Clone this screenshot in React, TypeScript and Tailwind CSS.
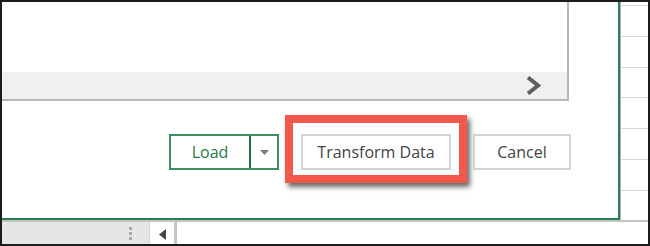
const font = { fontFamily: '"Open Sans", "Noto Sans", sans-serif' };

const cellRows = [
  'h-[32px] border-t border-[#d6d6d6]',
  'h-[31px] border-t border-[#d6d6d6]',
  'h-[31px] border-t border-[#d6d6d6]',
  'h-[31px] border-t border-[#d6d6d6]',
  'h-[32px] border-t border-[#d6d6d6]',
  'h-[31px] border-t border-[#d6d6d6]',
  'h-[31px] border-t border-[#d6d6d6]',
];

function Chevron() {
  return (
    <svg width="16" height="19" viewBox="0 0 16 19">
      <polyline points="3,1.5 13,9.5 3,17.5" fill="none" stroke="#5f5f5f" strokeWidth="4" strokeLinejoin="miter" />
    </svg>
  );
}

function LoadButton() {
  return (
    <div className="mt-[19px] flex h-[36px] w-[110px] border-2 border-[#3f8f63] bg-white">
      <div className="flex flex-1 items-center justify-center text-[16px] text-[#1f7a4a]">Load</div>
      <div className="flex w-[28px] items-center justify-center border-l-2 border-[#217346]">
        <svg width="9" height="5" viewBox="0 0 9 5">
          <polygon points="0,0 9,0 4.5,5" fill="#7a7a7a" />
        </svg>
      </div>
    </div>
  );
}

export default function App() {
  return (
    <div className="flex h-[246px] w-[650px] flex-col overflow-hidden border-2 border-[#1c1c1c] bg-white" style={font}>
      <div className="flex h-[218px]">
        {/* dialog */}
        <div className="flex w-[618px] flex-col border-b-2 border-r-2 border-[#2b7d52] bg-white">
          <div className="flex h-[99px] w-[567px] flex-col border-b-2 border-r-2 border-[#b8b8b8]">
            <div className="h-[70px] bg-white" />
            <div className="flex flex-1 items-center justify-end bg-[#f0f0f0] pr-[26px]">
              <Chevron />
            </div>
          </div>

          <div className="mt-[14px] flex items-start justify-end gap-[6px] pr-[47px]">
            <LoadButton />
            <div className="border-[8px] border-[#f4584c] bg-white pb-[5px] pl-[8px] pr-[8px] pt-[11px] shadow-[3px_4px_5px_rgba(0,0,0,0.6)]">
              <button className="flex h-[36px] w-[150px] items-center justify-center border-2 border-[#d2d2d2] bg-white text-[16px] text-[#444]">
                Transform Data
              </button>
            </div>
            <button className="mt-[19px] flex h-[36px] w-[98px] items-center justify-center border-2 border-[#d2d2d2] bg-white text-[16px] text-[#444]">
              Cancel
            </button>
          </div>
        </div>

        {/* worksheet cells */}
        <div className="flex flex-1 flex-col border-l border-[#b4b4b4] bg-white">
          <div className="h-[3px]" />
          {cellRows.map((c, i) => (
            <div key={i} className={c} />
          ))}
        </div>
      </div>

      {/* sheet tab bar */}
      <div className="flex flex-1 border-t-2 border-[#c4c4c4]">
        <div className="flex w-[147px] items-center justify-end bg-[#e6e6e6] pr-[17px]">
          <div className="flex flex-col gap-[2px]">
            <div className="h-[3px] w-[3px] bg-[#a8a8a8]" />
            <div className="h-[3px] w-[3px] bg-[#a8a8a8]" />
            <div className="h-[3px] w-[3px] bg-[#a8a8a8]" />
          </div>
        </div>
        <div className="flex w-[25px] items-center justify-center border-l border-[#d8d8d8] bg-white pt-[2px]">
          <svg width="7" height="11" viewBox="0 0 7 11">
            <polygon points="7,0 7,11 0,5.5" fill="#444" />
          </svg>
        </div>
        <div className="w-[3px] bg-[#c6c6c6]" />
        <div className="flex-1 bg-white" />
      </div>
    </div>
  );
}
